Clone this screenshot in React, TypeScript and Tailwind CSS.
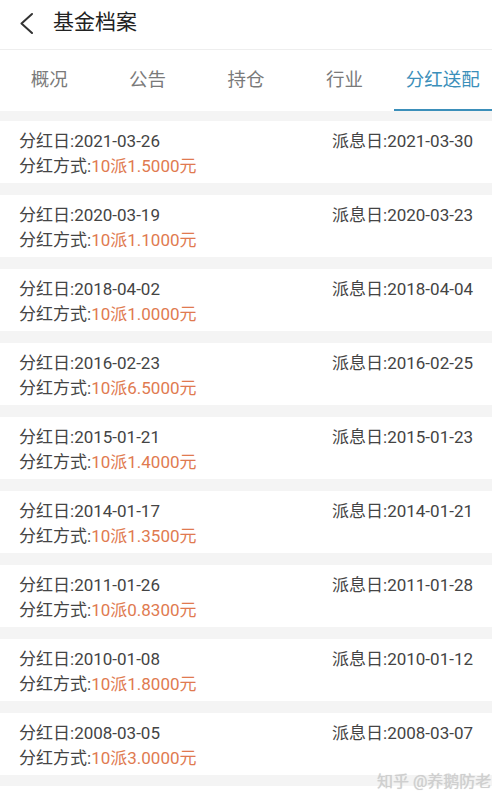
const rows = [
  { day: "2021-03-26", pay: "2021-03-30", plan: "10派1.5000元" },
  { day: "2020-03-19", pay: "2020-03-23", plan: "10派1.1000元" },
  { day: "2018-04-02", pay: "2018-04-04", plan: "10派1.0000元" },
  { day: "2016-02-23", pay: "2016-02-25", plan: "10派6.5000元" },
  { day: "2015-01-21", pay: "2015-01-23", plan: "10派1.4000元" },
  { day: "2014-01-17", pay: "2014-01-21", plan: "10派1.3500元" },
  { day: "2011-01-26", pay: "2011-01-28", plan: "10派0.8300元" },
  { day: "2010-01-08", pay: "2010-01-12", plan: "10派1.8000元" },
  { day: "2008-03-05", pay: "2008-03-07", plan: "10派3.0000元" },
];

const tabs = ["概况", "公告", "持仓", "行业", "分红送配"];

const font = "font-['Roboto','Noto_Sans_CJK_SC',sans-serif]";

export default function App() {
  return (
    <div className={`relative w-[500px] h-[803px] bg-white overflow-hidden ${font}`}>
      <div className="w-[492px]">
        {/* header */}
        <div className="h-[50px] flex items-center border-b border-[#eeeeee]">
          <svg className="ml-[19px] w-[16px] h-[22px] -mt-[4px]" viewBox="0 0 16 22" fill="none">
            <path d="M13 2 L2.5 11.5 L13 21" stroke="#333" strokeWidth="2" strokeLinecap="round" strokeLinejoin="round" />
          </svg>
          <span className="ml-[18px] -mt-[5px] text-[21px] text-[#222] leading-none">基金档案</span>
        </div>

        {/* tabs */}
        <div className="flex h-[61px]">
          {tabs.map((t, i) => (
            <div
              key={t}
              className={`flex-1 flex items-center justify-center pt-[3px] text-[18.5px] ${
                i === 4 ? "text-[#3b8fba] border-b-2 border-[#3b8fba]" : "text-[#7a7a7a] border-b-2 border-transparent"
              }`}
            >
              {t}
            </div>
          ))}
        </div>

        {/* list */}
        <div className="bg-[#f4f4f4] pt-[10px] pb-[11px] flex flex-col gap-[12px]">
          {rows.map((r) => (
            <div key={r.day} className="bg-white h-[62px] px-[19px] pt-[8px] text-[17px] leading-[25px] text-[#444]">
              <div className="flex justify-between">
                <span>分红日:{r.day}</span>
                <span>派息日:{r.pay}</span>
              </div>
              <div>
                分红方式:<span className="text-[#e07a50]">{r.plan}</span>
              </div>
            </div>
          ))}
        </div>
      </div>

      {/* watermark */}
      <div className="absolute left-[377px] top-[771px] text-[16px] text-[#cfcfcf] leading-[22px] [text-shadow:0_0_1px_rgba(0,0,0,0.15)]">
        知乎 @养鹅防老
      </div>
    </div>
  );
}
